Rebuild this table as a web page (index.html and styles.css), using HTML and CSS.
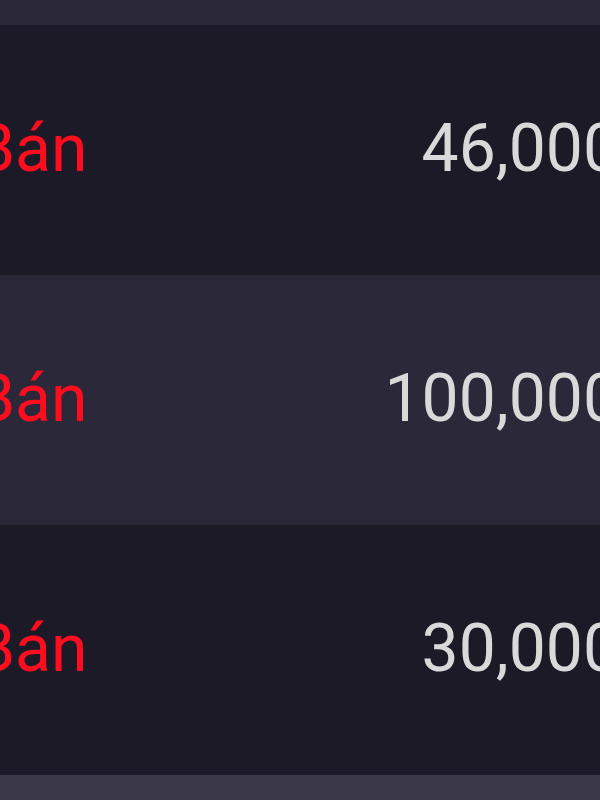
FILE: index.html
```html
<!DOCTYPE html>
<html>
<head>
<meta charset="utf-8">
<link rel="stylesheet" href="styles.css">
</head>
<body>
<div class="table">
  <div class="band band-top"></div>
  <div class="row row-dark"><span class="side">Bán</span><span class="amount">46,000</span></div>
  <div class="row row-light"><span class="side">Bán</span><span class="amount">100,000</span></div>
  <div class="row row-dark"><span class="side">Bán</span><span class="amount">30,000</span></div>
  <div class="band band-bottom"></div>
</div>
</body>
</html>
```
FILE: styles.css
```css
html, body {
  margin: 0;
  padding: 0;
  width: 600px;
  height: 800px;
  overflow: hidden;
  background: #1c1a27;
}
.table {
  width: 646px;
  margin-left: -26px;
  display: flex;
  flex-direction: column;
  font-family: Roboto, "Noto Sans", sans-serif;
  font-size: 66px;
}
.band-top {
  height: 25px;
  background: #2a2839;
}
.band-bottom {
  height: 40px;
  background: #3b3949;
}
.row {
  box-sizing: border-box;
  height: 250px;
  padding-bottom: 4px;
  display: flex;
  align-items: center;
  justify-content: space-between;
}
.row:last-of-type { height: 247px; }
.row-dark { background: #1c1a27; }
.row-light { background: #2a2839; }
.side { color: #ff0d1f; }
.amount { color: #d9d9d9; }
```
